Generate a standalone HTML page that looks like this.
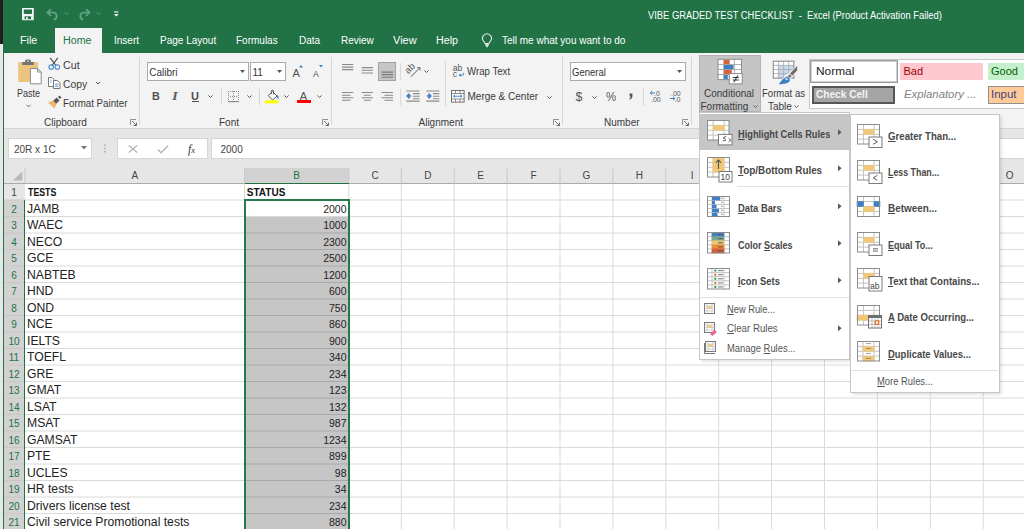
<!DOCTYPE html>
<html><head><meta charset="utf-8">
<style>
*{margin:0;padding:0;box-sizing:border-box}
html,body{width:1024px;height:529px;overflow:hidden;background:#fff}
body{position:relative;font-family:"Liberation Sans",sans-serif;font-size:10px;color:#3a3a3a}
.a{position:absolute}
.t{position:absolute;white-space:nowrap;line-height:12px;font-size:10px}
svg{position:absolute;overflow:visible}
.mi u{text-decoration:underline;text-decoration-thickness:1px;text-underline-offset:1px}
</style></head><body>

<!-- ===== TITLE BAR ===== -->
<div class="a" style="left:0;top:0;width:1024px;height:53px;background:#217346"></div>
<div class="a" style="left:0;top:0;width:3px;height:44px;background:#1f1f1f"></div>
<div class="a" style="left:0;top:44px;width:3px;height:9px;background:#e8e8e8"></div>
<!-- save -->
<svg style="left:22px;top:7.6px" width="12" height="12.5" viewBox="0 0 12 12.5">
<rect x="0" y="0" width="11.8" height="12.3" rx="0.8" fill="#f4f4f4"/>
<path d="M1.8 1.4H10V5A1 1 0 0 1 9 6H2.8A1 1 0 0 1 1.8 5Z" fill="#217346"/>
<rect x="2.6" y="8.3" width="6.4" height="2.9" fill="#217346"/>
<rect x="4" y="9.2" width="1.9" height="2" fill="#f4f4f4"/>
</svg>
<!-- undo -->
<svg style="left:46px;top:7.5px" width="13" height="12" viewBox="0 0 13 12">
<path d="M1.5 4.5H7.5A3.6 3.6 0 0 1 7.8 11.6" fill="none" stroke="#66a583" stroke-width="1.7"/>
<path d="M5 1L1.5 4.5L5 8" fill="none" stroke="#66a583" stroke-width="1.7"/>
</svg>
<svg style="left:64px;top:12px" width="5" height="3" viewBox="0 0 5 3"><path d="M0.5 0.5L2.5 2.5L4.5 0.5" fill="none" stroke="#5a9c78" stroke-width="1"/></svg>
<!-- redo -->
<svg style="left:78px;top:7.5px" width="13" height="12" viewBox="0 0 13 12">
<path d="M11.5 4.5H5.5A3.6 3.6 0 0 0 5.2 11.6" fill="none" stroke="#66a583" stroke-width="1.7"/>
<path d="M8 1L11.5 4.5L8 8" fill="none" stroke="#66a583" stroke-width="1.7"/>
</svg>
<svg style="left:96px;top:12px" width="5" height="3" viewBox="0 0 5 3"><path d="M0.5 0.5L2.5 2.5L4.5 0.5" fill="none" stroke="#5a9c78" stroke-width="1"/></svg>
<!-- customize -->
<svg style="left:113.8px;top:10.8px" width="5" height="6" viewBox="0 0 5 6">
<rect x="0.2" y="0.3" width="4.2" height="1.3" fill="#d8e6de"/>
<path d="M0 3.1H4.6L2.3 5.6Z" fill="#fff"/>
</svg>
<div class="t" style="left:647.6px;top:10px;color:#fff;font-size:10px;transform:scaleX(0.937);transform-origin:0 0">VIBE GRADED TEST CHECKLIST&nbsp; - &nbsp;Excel (Product Activation Failed)</div>

<!-- tabs -->
<div class="a" style="left:55px;top:28px;width:47px;height:25px;background:#f3f3f3"></div>
<div class="t" style="left:20.3px;top:35px;color:#fff;transform:scaleX(1.07);transform-origin:0 0">File</div>
<div class="t" style="left:63.2px;top:35px;color:#217346;transform:scaleX(1.07);transform-origin:0 0">Home</div>
<div class="t" style="left:114px;top:35px;color:#fff">Insert</div>
<div class="t" style="left:160px;top:35px;color:#fff">Page Layout</div>
<div class="t" style="left:236px;top:35px;color:#fff">Formulas</div>
<div class="t" style="left:299px;top:35px;color:#fff">Data</div>
<div class="t" style="left:341px;top:35px;color:#fff">Review</div>
<div class="t" style="left:392.6px;top:35px;color:#fff;transform:scaleX(1.1);transform-origin:0 0">View</div>
<div class="t" style="left:435.6px;top:35px;color:#fff;transform:scaleX(1.07);transform-origin:0 0">Help</div>
<svg style="left:481.7px;top:33.6px" width="10.5" height="13.5" viewBox="0 0 10.5 13.5">
<path d="M3.3 9.6L1.6 7.2A4.4 4.4 0 1 1 8.4 7.2L6.7 9.6Z" fill="none" stroke="#e6efe9" stroke-width="1.05"/>
<rect x="3.3" y="10" width="3.4" height="2" fill="#cfe0d5"/>
<path d="M4 12.7H6" stroke="#e6efe9" stroke-width="1"/>
</svg>
<div class="t" style="left:502px;top:35px;color:#fff">Tell me what you want to do</div>

<!-- ===== RIBBON ===== -->
<div class="a" style="left:3px;top:53px;width:1021px;height:75px;background:#f3f3f3"></div>
<div class="a" style="left:3px;top:128px;width:1021px;height:1px;background:#d4d4d4"></div>
<div class="a" style="left:0;top:53px;width:3px;height:476px;background:#e8e8e8"></div>


<!-- Clipboard group -->
<svg style="left:17px;top:58px" width="26" height="27" viewBox="0 0 26 27">
<rect x="1.2" y="4" width="19.8" height="20" rx="1" fill="#ebc47e"/>
<rect x="5.2" y="4" width="11.5" height="3" rx="0.6" fill="#737373"/>
<path d="M8 4.3V3.2Q8 1.6 9.6 1.6H12.4Q14 1.6 14 3.2V4.3Z" fill="#737373"/>
<rect x="10.2" y="2.6" width="1.6" height="1.2" fill="#e6e6e6"/>
<path d="M13.4 10.5H20.6L24.2 14V25.8H13.4Z" fill="#fff" stroke="#8a8a8a" stroke-width="1"/>
<path d="M20.6 10.5V14H24.2" fill="none" stroke="#8a8a8a" stroke-width="1"/>
</svg>
<div class="t" style="left:16.8px;top:88px;transform:scaleX(0.9);transform-origin:0 0">Paste</div>
<svg style="left:26px;top:104px" width="5" height="4" viewBox="0 0 5 4"><path d="M0.5 0.8L2.5 2.8L4.5 0.8" fill="none" stroke="#555" stroke-width="0.9"/></svg>
<svg style="left:47px;top:57px" width="14" height="14" viewBox="0 0 14 14">
<path d="M3.2 0.8L9.3 9M10.8 0.8L4.7 9" stroke="#505050" stroke-width="1.2"/>
<circle cx="4.2" cy="10" r="2.3" fill="none" stroke="#4a8bd0" stroke-width="1.1"/>
<circle cx="10.3" cy="10" r="2.3" fill="none" stroke="#4a8bd0" stroke-width="1.1"/>
</svg>
<div class="t" style="left:63.2px;top:60px;transform:scaleX(1.07);transform-origin:0 0">Cut</div>
<svg style="left:47px;top:76px" width="15" height="14" viewBox="0 0 15 14">
<path d="M1.5 1.5H5L6.8 3.3V10.5H1.5Z" fill="#fff" stroke="#6a6a6a" stroke-width="0.9"/>
<path d="M6.5 4.5H10.5L13 7V12.5H6.5Z" fill="#fff" stroke="#6a6a6a" stroke-width="0.9"/>
<path d="M3.2 4.2H4.5M3.2 6.2H4.5M8 8.2H11.5M8 10.2H11.5" stroke="#4a8bd0" stroke-width="0.9"/>
</svg>
<div class="t" style="left:63.2px;top:79px;transform:scaleX(1.03);transform-origin:0 0">Copy</div>
<svg style="left:95px;top:81px" width="6" height="4" viewBox="0 0 6 4"><path d="M1 1L3 3L5 1" fill="none" stroke="#5a5a5a" stroke-width="1"/></svg>
<svg style="left:47px;top:95px" width="15" height="14" viewBox="0 0 15 14">
<path d="M1 7.5L6 5.5L9.5 9L7.5 13.5Z" fill="#e9b86a"/>
<path d="M6.3 5.8L9.6 2.5L12.5 5.4L9.2 8.7Z" fill="#555"/>
<path d="M11 2L12.5 0.5L14.5 2.5L13 4Z" fill="#555"/>
</svg>
<div class="t" style="left:63.2px;top:98px;transform:scaleX(0.975);transform-origin:0 0">Format Painter</div>
<div class="t" style="left:44px;top:117px">Clipboard</div>
<svg style="left:130px;top:119px" width="7" height="7" viewBox="0 0 7 7">
<path d="M0.5 6V0.5H6" fill="none" stroke="#888" stroke-width="0.9"/>
<path d="M2 2L6.5 6.5M3.5 6.5H6.5V3.5" fill="none" stroke="#666" stroke-width="0.9"/>
</svg>
<div class="a" style="left:139px;top:57px;width:1px;height:68px;background:#d6d6d6"></div>


<!-- Font group -->
<div class="a" style="left:147px;top:62px;width:102px;height:19px;background:#fff;border:1px solid #ababab"></div>
<div class="t" style="left:149.2px;top:66.5px;color:#333">Calibri</div>
<svg style="left:240px;top:70px" width="5" height="3" viewBox="0 0 5 3"><path d="M0 0H5L2.5 3Z" fill="#555"/></svg>
<div class="a" style="left:250px;top:62px;width:36px;height:19px;background:#fff;border:1px solid #ababab"></div>
<div class="t" style="left:252.5px;top:66.5px;color:#333">11</div>
<svg style="left:277px;top:70px" width="5" height="3" viewBox="0 0 5 3"><path d="M0 0H5L2.5 3Z" fill="#555"/></svg>
<div class="t" style="left:292.5px;top:66.5px;font-size:11px;color:#505050">A</div>
<svg style="left:299.3px;top:65.2px" width="4" height="2.5" viewBox="0 0 4 2.5"><path d="M0 2.5H4L2 0Z" fill="#3f7fc4"/></svg>
<div class="t" style="left:313px;top:67.6px;font-size:8.5px;color:#505050">A</div>
<svg style="left:318.9px;top:65px" width="4" height="2.5" viewBox="0 0 4 2.5"><path d="M0 0H4L2 2.5Z" fill="#3f7fc4"/></svg>

<div class="t" style="left:152px;top:91px;font-size:10px;font-weight:bold;color:#505050;transform:scaleX(1.08);transform-origin:0 0">B</div>
<div class="t" style="left:171.8px;top:90px;font-size:12px;font-style:italic;font-family:'Liberation Serif',serif;font-weight:bold;color:#606060;transform:scaleX(1.25);transform-origin:0 0">I</div>
<div class="t" style="left:191px;top:91px;font-size:10px;font-weight:bold;color:#505050;transform:scaleX(1.1);transform-origin:0 0">U</div>
<div class="a" style="left:191.5px;top:101px;width:7.5px;height:1px;background:#505050"></div>
<svg style="left:208px;top:95px" width="5" height="3" viewBox="0 0 5 3"><path d="M0.4 0.4L2.5 2.5L4.6 0.4" fill="none" stroke="#5a5a5a" stroke-width="1"/></svg>
<div class="a" style="left:221px;top:89px;width:1px;height:16px;background:#d4d4d4"></div>
<svg style="left:228px;top:90.5px" width="11" height="12" viewBox="0 0 11 12">
<g fill="#8e8e8e"><rect x="0" y="0" width="1" height="1"/><rect x="0" y="2" width="1" height="1"/><rect x="0" y="4" width="1" height="1"/><rect x="0" y="6" width="1" height="1"/><rect x="0" y="8" width="1" height="1"/><rect x="5" y="0" width="1" height="1"/><rect x="5" y="2" width="1" height="1"/><rect x="5" y="4" width="1" height="1"/><rect x="5" y="6" width="1" height="1"/><rect x="5" y="8" width="1" height="1"/><rect x="10" y="0" width="1" height="1"/><rect x="10" y="2" width="1" height="1"/><rect x="10" y="4" width="1" height="1"/><rect x="10" y="6" width="1" height="1"/><rect x="10" y="8" width="1" height="1"/><rect x="2" y="0" width="1" height="1"/><rect x="4" y="0" width="1" height="1"/><rect x="6" y="0" width="1" height="1"/><rect x="8" y="0" width="1" height="1"/><rect x="2" y="5" width="1" height="1"/><rect x="4" y="5" width="1" height="1"/><rect x="6" y="5" width="1" height="1"/><rect x="8" y="5" width="1" height="1"/></g>
<path d="M0 10.6H11" stroke="#8a8a8a" stroke-width="1.2"/>
</svg>
<svg style="left:246.5px;top:95px" width="5" height="3" viewBox="0 0 5 3"><path d="M0.4 0.4L2.5 2.5L4.6 0.4" fill="none" stroke="#5a5a5a" stroke-width="1"/></svg>
<div class="a" style="left:258.5px;top:89px;width:1px;height:16px;background:#d4d4d4"></div>
<svg style="left:265px;top:89.5px" width="15" height="14" viewBox="0 0 15 14">
<path d="M3.2 5.6L7.6 1.6L12 6L7.6 10Z" fill="#fff" stroke="#5a5a5a" stroke-width="1"/>
<path d="M6.3 4V1.2A1.1 1.1 0 0 1 8.5 1.2V4.5" fill="none" stroke="#5a5a5a" stroke-width="1"/>
<path d="M11.8 5C13.6 5.3 14.2 7.5 13.2 9.6L12 7.2Z" fill="#3f7fc4"/>
<rect x="0" y="10.2" width="13.3" height="3.2" fill="#ffff00"/>
</svg>
<svg style="left:284px;top:95px" width="5" height="3" viewBox="0 0 5 3"><path d="M0.4 0.4L2.5 2.5L4.6 0.4" fill="none" stroke="#5a5a5a" stroke-width="1"/></svg>
<div class="t" style="left:299.8px;top:89.5px;font-size:11px;color:#505050">A</div>
<div class="a" style="left:297px;top:100px;width:13.5px;height:3.2px;background:#f00"></div>
<svg style="left:317px;top:95px" width="5" height="3" viewBox="0 0 5 3"><path d="M0.4 0.4L2.5 2.5L4.6 0.4" fill="none" stroke="#5a5a5a" stroke-width="1"/></svg>
<div class="t" style="left:219px;top:117px">Font</div>
<svg style="left:322px;top:119px" width="7" height="7" viewBox="0 0 7 7">
<path d="M0.5 6V0.5H6" fill="none" stroke="#888" stroke-width="0.9"/>
<path d="M2 2L6.5 6.5M3.5 6.5H6.5V3.5" fill="none" stroke="#666" stroke-width="0.9"/>
</svg>
<div class="a" style="left:331px;top:57px;width:1px;height:68px;background:#d6d6d6"></div>


<!-- Alignment group -->
<div class="a" style="left:378px;top:62px;width:18.3px;height:18.7px;background:#c6c6c6;border:1px solid #a3a3a3"></div>
<svg style="left:0;top:0" width="1" height="1" viewBox="0 0 1 1">
<path d="M342 64.4H353.3M342 67.1H353.3M342 69.6H353.3M361.7 67.6H372.9M361.7 70.3H372.9M361.7 73H372.9M342 92.5H353.3M342 95.2H350.5M342 97.7H353.3M342 100.3H350.5M361.7 92.5H372.9M363.8 95.2H370.8M361.7 97.7H372.9M363.8 100.3H370.8M381.5 92.5H393.1M384.5 95.2H393.1M381.5 97.7H393.1M384.5 100.3H393.1M406.2 90.9H419.6M413 93.6H419.6M413 96.3H419.6M413 98.8H419.6M406.2 101.1H419.6M426.2 90.9H439.3M433 93.6H439.3M433 96.3H439.3M433 98.8H439.3M426.2 101.1H439.3" stroke="#8a8a8a" stroke-width="1.05" fill="none"/>
<path d="M381.5 72.1H393.1M381.5 74.6H393.1M381.5 77.3H393.1" stroke="#787878" stroke-width="1.05" fill="none"/>
<path d="M411.2 96H407.3M409.6 93.7L407.2 96L409.6 98.3" fill="none" stroke="#3f7fc4" stroke-width="1.6"/>
<path d="M426.8 96H430.7M428.4 93.7L430.8 96L428.4 98.3" fill="none" stroke="#3f7fc4" stroke-width="1.6"/>
<path d="M400.5 63V80M400.5 88V105.5" stroke="#dadada" stroke-width="1"/>
</svg>
<svg style="left:405px;top:63px" width="16" height="15" viewBox="0 0 16 15">
<text x="0" y="0" font-family="Liberation Sans" font-size="9.5" fill="#555" transform="translate(3.3,11.2) rotate(-45)">ab</text>
<path d="M6 13.6L14.2 5.4" stroke="#555" stroke-width="1"/>
<path d="M12.2 4.6H15V7.4" fill="none" stroke="#555" stroke-width="0.9"/>
</svg>
<svg style="left:424px;top:70px" width="5" height="3" viewBox="0 0 5 3"><path d="M0.4 0.4L2.5 2.5L4.6 0.4" fill="none" stroke="#5a5a5a" stroke-width="1"/></svg>
<div class="a" style="left:445px;top:61px;width:1px;height:45px;background:#d8d8d8"></div>
<svg style="left:452px;top:64px" width="13" height="14" viewBox="0 0 13 14">
<text x="0.8" y="6.8" font-family="Liberation Sans" font-size="8.6" fill="#555">ab</text>
<text x="0.8" y="13.2" font-family="Liberation Sans" font-size="8.6" fill="#555">c</text>
<path d="M7.5 11.2H10.2Q11.6 11.2 11.6 9.8V8.8" fill="none" stroke="#3f7fc4" stroke-width="1"/>
<path d="M6.6 11.2L8.6 9.6V12.8Z" fill="#3f7fc4"/>
</svg>
<div class="t" style="left:467px;top:66px;transform:scaleX(0.965);transform-origin:0 0">Wrap Text</div>
<svg style="left:451px;top:90px" width="14" height="13" viewBox="0 0 14 13">
<rect x="0.5" y="0.5" width="12.6" height="11.6" fill="#fff" stroke="#6e6e6e" stroke-width="1"/>
<path d="M0.5 3.5H13M0.5 9H13M4.5 0.5V3.5M9 0.5V3.5M4.5 9V12M9 9V12" stroke="#6e6e6e" stroke-width="0.8"/>
<path d="M2.5 6.2H11M4 4.8L2.5 6.2L4 7.6M9.5 4.8L11 6.2L9.5 7.6" fill="none" stroke="#3f7fc4" stroke-width="1"/>
</svg>
<div class="t" style="left:467.5px;top:91px">Merge &amp; Center</div>
<svg style="left:547px;top:95.5px" width="5" height="3" viewBox="0 0 5 3"><path d="M0.4 0.4L2.5 2.5L4.6 0.4" fill="none" stroke="#5a5a5a" stroke-width="1"/></svg>
<div class="t" style="left:418.5px;top:117px">Alignment</div>
<svg style="left:553px;top:119px" width="7" height="7" viewBox="0 0 7 7">
<path d="M0.5 6V0.5H6" fill="none" stroke="#888" stroke-width="0.9"/>
<path d="M2 2L6.5 6.5M3.5 6.5H6.5V3.5" fill="none" stroke="#666" stroke-width="0.9"/>
</svg>
<div class="a" style="left:562px;top:57px;width:1px;height:68px;background:#d6d6d6"></div>

<!-- Number group -->
<div class="a" style="left:570px;top:62px;width:115.5px;height:19px;background:#fff;border:1px solid #ababab"></div>
<div class="t" style="left:572.3px;top:66.5px;color:#333;transform:scaleX(0.95);transform-origin:0 0">General</div>
<svg style="left:677px;top:70px" width="5" height="3" viewBox="0 0 5 3"><path d="M0 0H5L2.5 3Z" fill="#555"/></svg>
<div class="t" style="left:575.5px;top:90.5px;font-size:12.5px;color:#555">$</div>
<svg style="left:591.5px;top:95.5px" width="5" height="3" viewBox="0 0 5 3"><path d="M0.4 0.4L2.5 2.5L4.6 0.4" fill="none" stroke="#5a5a5a" stroke-width="1"/></svg>
<div class="t" style="left:606px;top:91px;font-size:12px;color:#555;transform:scaleX(0.95);transform-origin:0 0">%</div>
<svg style="left:628px;top:92.5px" width="6" height="7" viewBox="0 0 6 7"><path d="M1.6 0.6H4.4V3.2C4.4 4.8 3.5 6 1.6 6.6L1.2 5.8C2.2 5.3 2.6 4.6 2.6 3.6H1.6Z" fill="#555"/></svg>
<div class="a" style="left:643px;top:88px;width:1px;height:17.5px;background:#d8d8d8"></div>
<svg style="left:649px;top:90px" width="14" height="13" viewBox="0 0 14 13">
<text x="5" y="5.6" font-family="Liberation Sans" font-size="7" fill="#555">.0</text>
<text x="2" y="11.6" font-family="Liberation Sans" font-size="7" fill="#555">.00</text>
<path d="M6 3H1.5M3.3 1.2L1.2 3L3.3 4.8" fill="none" stroke="#3f7fc4" stroke-width="1"/>
</svg>
<svg style="left:669px;top:90px" width="14" height="13" viewBox="0 0 14 13">
<text x="2" y="5.6" font-family="Liberation Sans" font-size="7" fill="#555">.00</text>
<text x="5.5" y="11.6" font-family="Liberation Sans" font-size="7" fill="#555">.0</text>
<path d="M0.8 8.5H5.8M4 6.7L6 8.5L4 10.3" fill="none" stroke="#3f7fc4" stroke-width="1"/>
</svg>
<div class="t" style="left:604px;top:117px">Number</div>
<svg style="left:682px;top:119px" width="7" height="7" viewBox="0 0 7 7">
<path d="M0.5 6V0.5H6" fill="none" stroke="#888" stroke-width="0.9"/>
<path d="M2 2L6.5 6.5M3.5 6.5H6.5V3.5" fill="none" stroke="#666" stroke-width="0.9"/>
</svg>
<div class="a" style="left:691px;top:57px;width:1px;height:68px;background:#d6d6d6"></div>


<!-- Styles group -->
<div class="a" style="left:699px;top:55px;width:61.5px;height:56.5px;background:#c5c5c5;border:1px solid #b3b3b3"></div>
<svg style="left:717px;top:59px" width="27" height="26" viewBox="0 0 27 26">
<rect x="1" y="0.3" width="23.5" height="20.3" fill="#fff"/>
<path d="M6.8 0.3V20.6M12.3 0.3V20.6M17.4 0.3V20.6M1 5.5H24.5M1 10.5H24.5M1 15.5H24.5" stroke="#a8a8a8" stroke-width="0.9"/>
<rect x="6.8" y="0.8" width="5.5" height="4.4" fill="#d9623b"/>
<rect x="6.8" y="5.9" width="9.7" height="4.3" fill="#3f7fc4"/>
<rect x="6.8" y="10.9" width="8" height="4.3" fill="#d9623b"/>
<rect x="6.8" y="15.9" width="4" height="4.4" fill="#3f7fc4"/>
<rect x="1" y="0.3" width="23.5" height="20.3" fill="none" stroke="#8e8e8e" stroke-width="1"/>
<rect x="12.3" y="14.6" width="13" height="10.3" fill="#fff" stroke="#8a8a8a" stroke-width="1"/>
<path d="M15.8 18.4H21.8M15.8 21H21.8M20.8 16.4L16.8 23.2" stroke="#3a3a3a" stroke-width="1.05" fill="none"/>
</svg>
<div class="t" style="left:704px;top:88px">Conditional</div>
<div class="t" style="left:700.5px;top:100.8px">Formatting</div>
<svg style="left:753px;top:105px" width="5" height="3" viewBox="0 0 5 3"><path d="M0.4 0.4L2.5 2.5L4.6 0.4" fill="none" stroke="#555" stroke-width="0.9"/></svg>

<svg style="left:772px;top:60px" width="27" height="25" viewBox="0 0 27 25">
<rect x="1.3" y="1.2" width="20.6" height="16.9" fill="#fff"/>
<rect x="6.4" y="5.4" width="15.5" height="12.7" fill="#c5d9ef"/>
<path d="M6.4 1.2V18.1M11.6 1.2V18.1M16.7 1.2V18.1M1.3 5.4H21.9M1.3 9.5H21.9M1.3 13.6H21.9" stroke="#a8a8a8" stroke-width="0.8"/>
<rect x="1.3" y="1.2" width="20.6" height="16.9" fill="none" stroke="#8c8c8c" stroke-width="1.1"/>
<path d="M26 4.5V10.5L20.2 17.5L15 22.5L6 25L13 15.5L17.5 12.5Z" fill="#f3f3f3"/>
<path d="M25.2 6V10.2L20.3 15.8L18 13.6Z" fill="#6e6e6e"/>
<path d="M17.6 14.2L19.7 16.2L18 18L15.9 16Z" fill="#6e6e6e"/>
<path d="M15.2 16.6C17.2 17.2 18.4 19.2 17.6 21.2C16.4 23.4 12.5 24 6.8 24.2C9.2 21 11.6 17.6 15.2 16.6Z" fill="#3f7fc4"/>
<path d="M13.6 17.9C14.9 17.8 15.8 18.7 15.8 20L13.4 19.6Z" fill="#fff"/>
</svg>
<div class="t" style="left:762.3px;top:88px;transform:scaleX(0.955);transform-origin:0 0">Format as</div>
<div class="t" style="left:768px;top:100.8px">Table</div>
<svg style="left:794px;top:105px" width="5" height="3" viewBox="0 0 5 3"><path d="M0.4 0.4L2.5 2.5L4.6 0.4" fill="none" stroke="#555" stroke-width="0.9"/></svg>

<div class="a" style="left:808.5px;top:59px;width:220px;height:49.5px;background:#fff;border:1px solid #c8c8c8"></div>
<div class="a" style="left:810px;top:60.3px;width:88px;height:22.3px;background:#fff;border:1px solid #9c9c9c"></div>
<div class="a" style="left:811px;top:61.3px;width:86px;height:20.3px;border:1px solid #d0d0d0"></div>
<div class="t" style="left:815.8px;top:64.6px;font-size:11px;color:#1a1a1a;transform:scaleX(1.08);transform-origin:0 0">Normal</div>
<div class="a" style="left:900px;top:62.9px;width:82.7px;height:17.5px;background:#ffc7ce"></div>
<div class="t" style="left:903.5px;top:64.7px;font-size:11px;color:#9c0006">Bad</div>
<div class="a" style="left:987.7px;top:62.9px;width:40px;height:17.5px;background:#c6efce"></div>
<div class="t" style="left:991px;top:64.7px;font-size:11px;color:#006100">Good</div>
<div class="a" style="left:812.4px;top:86px;width:82.8px;height:17.7px;background:#a5a5a5;border:2px solid #565656"></div>
<div class="t" style="left:816px;top:88px;font-size:11px;font-weight:bold;color:#f4f4f4;transform:scaleX(0.92);transform-origin:0 0">Check Cell</div>
<div class="t" style="left:903.5px;top:87.5px;font-size:11px;font-style:italic;color:#7f7f7f;transform:scaleX(1.03);transform-origin:0 0">Explanatory ...</div>
<div class="a" style="left:987.7px;top:85.9px;width:40px;height:17.9px;background:#ffcc99;border:1px solid #8f8f8f"></div>
<div class="t" style="left:991px;top:87.5px;font-size:11px;color:#3f3f76;transform:scaleX(1.04);transform-origin:0 0">Input</div>

<!-- ===== FORMULA BAR ===== -->
<div class="a" style="left:3px;top:129px;width:1021px;height:39px;background:#e6e6e6"></div>
<div class="a" style="left:8px;top:138px;width:84.3px;height:21px;background:#fff;border:1px solid #d6d6d6"></div>
<div class="t" style="left:14px;top:144px;color:#444">20R x 1C</div>
<svg style="left:81px;top:146px" width="6" height="4" viewBox="0 0 6 4"><path d="M0 0H6L3 3.5Z" fill="#777"/></svg>
<svg style="left:104px;top:144px" width="2" height="9" viewBox="0 0 2 9"><rect x="0.2" y="0.5" width="1.3" height="1.3" fill="#999"/><rect x="0.2" y="3.8" width="1.3" height="1.3" fill="#999"/><rect x="0.2" y="7.1" width="1.3" height="1.3" fill="#999"/></svg>
<div class="a" style="left:117.3px;top:138px;width:90.5px;height:21px;background:#fff;border:1px solid #d6d6d6"></div>
<svg style="left:128px;top:144.8px" width="10" height="8" viewBox="0 0 10 8"><path d="M0.8 0.5L9.2 7.6M9.2 0.5L0.8 7.6" stroke="#b4b4b4" stroke-width="1.25"/></svg>
<svg style="left:157px;top:144.5px" width="12" height="9" viewBox="0 0 12 9"><path d="M0.8 4.5L4 7.8L11.2 0.8" fill="none" stroke="#b4b4b4" stroke-width="1.35"/></svg>
<div class="t" style="left:188px;top:142.5px;font-family:'Liberation Serif',serif;font-style:italic;font-weight:normal;font-size:11.5px;color:#333">f<span style="font-size:8.5px;position:relative;top:0.5px">x</span></div>
<div class="a" style="left:210.5px;top:138px;width:820px;height:21px;background:#fff;border:1px solid #d6d6d6"></div>
<div class="t" style="left:220.5px;top:144px;color:#444">2000</div>

<!-- ===== GRID ===== -->
<div class="a" style="left:3px;top:168px;width:1021px;height:361px;background:#fff"></div>
<div class="a" style="left:3px;top:168px;width:1021px;height:15.5px;background:#e6e6e6"></div>
<div class="a" style="left:3px;top:183.5px;width:22px;height:346px;background:#e6e6e6"></div>
<div class="a" style="left:25px;top:200px;width:-1px;height:0"></div>
<div class="a" style="left:244.5px;top:168px;width:104.5px;height:15.5px;background:#d2d2d2"></div>
<div class="a" style="left:3px;top:200.0px;width:22px;height:329.0px;background:#d2d2d2"></div>
<svg style="left:0;top:0" width="1024" height="529" viewBox="0 0 1024 529">
<line x1="25" y1="168" x2="25" y2="183.5" stroke="#c8c8c8" stroke-width="1"/>
<line x1="244.5" y1="168" x2="244.5" y2="183.5" stroke="#c8c8c8" stroke-width="1"/>
<line x1="348.8" y1="168" x2="348.8" y2="183.5" stroke="#c8c8c8" stroke-width="1"/>
<line x1="401.3" y1="168" x2="401.3" y2="183.5" stroke="#c8c8c8" stroke-width="1"/>
<line x1="454.2" y1="168" x2="454.2" y2="183.5" stroke="#c8c8c8" stroke-width="1"/>
<line x1="507.1" y1="168" x2="507.1" y2="183.5" stroke="#c8c8c8" stroke-width="1"/>
<line x1="560.0" y1="168" x2="560.0" y2="183.5" stroke="#c8c8c8" stroke-width="1"/>
<line x1="612.9" y1="168" x2="612.9" y2="183.5" stroke="#c8c8c8" stroke-width="1"/>
<line x1="665.8" y1="168" x2="665.8" y2="183.5" stroke="#c8c8c8" stroke-width="1"/>
<line x1="718.7" y1="168" x2="718.7" y2="183.5" stroke="#c8c8c8" stroke-width="1"/>
<line x1="771.6" y1="168" x2="771.6" y2="183.5" stroke="#c8c8c8" stroke-width="1"/>
<line x1="824.5" y1="168" x2="824.5" y2="183.5" stroke="#c8c8c8" stroke-width="1"/>
<line x1="877.4" y1="168" x2="877.4" y2="183.5" stroke="#c8c8c8" stroke-width="1"/>
<line x1="930.3" y1="168" x2="930.3" y2="183.5" stroke="#c8c8c8" stroke-width="1"/>
<line x1="983.2" y1="168" x2="983.2" y2="183.5" stroke="#c8c8c8" stroke-width="1"/>
<line x1="1036.1" y1="168" x2="1036.1" y2="183.5" stroke="#c8c8c8" stroke-width="1"/>
<line x1="3" y1="183.5" x2="1024" y2="183.5" stroke="#ababab" stroke-width="1"/>
<line x1="244.5" y1="183.5" x2="244.5" y2="529" stroke="#dadada" stroke-width="1"/>
<line x1="348.8" y1="183.5" x2="348.8" y2="529" stroke="#dadada" stroke-width="1"/>
<line x1="401.3" y1="183.5" x2="401.3" y2="529" stroke="#dadada" stroke-width="1"/>
<line x1="454.2" y1="183.5" x2="454.2" y2="529" stroke="#dadada" stroke-width="1"/>
<line x1="507.1" y1="183.5" x2="507.1" y2="529" stroke="#dadada" stroke-width="1"/>
<line x1="560.0" y1="183.5" x2="560.0" y2="529" stroke="#dadada" stroke-width="1"/>
<line x1="612.9" y1="183.5" x2="612.9" y2="529" stroke="#dadada" stroke-width="1"/>
<line x1="665.8" y1="183.5" x2="665.8" y2="529" stroke="#dadada" stroke-width="1"/>
<line x1="718.7" y1="183.5" x2="718.7" y2="529" stroke="#dadada" stroke-width="1"/>
<line x1="771.6" y1="183.5" x2="771.6" y2="529" stroke="#dadada" stroke-width="1"/>
<line x1="824.5" y1="183.5" x2="824.5" y2="529" stroke="#dadada" stroke-width="1"/>
<line x1="877.4" y1="183.5" x2="877.4" y2="529" stroke="#dadada" stroke-width="1"/>
<line x1="930.3" y1="183.5" x2="930.3" y2="529" stroke="#dadada" stroke-width="1"/>
<line x1="983.2" y1="183.5" x2="983.2" y2="529" stroke="#dadada" stroke-width="1"/>
<line x1="1036.1" y1="183.5" x2="1036.1" y2="529" stroke="#dadada" stroke-width="1"/>
<line x1="25" y1="200.0" x2="1024" y2="200.0" stroke="#dadada" stroke-width="1"/>
<line x1="3" y1="200.0" x2="25" y2="200.0" stroke="#c8c8c8" stroke-width="1"/>
<line x1="25" y1="216.5" x2="1024" y2="216.5" stroke="#dadada" stroke-width="1"/>
<line x1="3" y1="216.5" x2="25" y2="216.5" stroke="#c8c8c8" stroke-width="1"/>
<line x1="25" y1="233.0" x2="1024" y2="233.0" stroke="#dadada" stroke-width="1"/>
<line x1="3" y1="233.0" x2="25" y2="233.0" stroke="#c8c8c8" stroke-width="1"/>
<line x1="25" y1="249.5" x2="1024" y2="249.5" stroke="#dadada" stroke-width="1"/>
<line x1="3" y1="249.5" x2="25" y2="249.5" stroke="#c8c8c8" stroke-width="1"/>
<line x1="25" y1="266.0" x2="1024" y2="266.0" stroke="#dadada" stroke-width="1"/>
<line x1="3" y1="266.0" x2="25" y2="266.0" stroke="#c8c8c8" stroke-width="1"/>
<line x1="25" y1="282.5" x2="1024" y2="282.5" stroke="#dadada" stroke-width="1"/>
<line x1="3" y1="282.5" x2="25" y2="282.5" stroke="#c8c8c8" stroke-width="1"/>
<line x1="25" y1="299.0" x2="1024" y2="299.0" stroke="#dadada" stroke-width="1"/>
<line x1="3" y1="299.0" x2="25" y2="299.0" stroke="#c8c8c8" stroke-width="1"/>
<line x1="25" y1="315.5" x2="1024" y2="315.5" stroke="#dadada" stroke-width="1"/>
<line x1="3" y1="315.5" x2="25" y2="315.5" stroke="#c8c8c8" stroke-width="1"/>
<line x1="25" y1="332.0" x2="1024" y2="332.0" stroke="#dadada" stroke-width="1"/>
<line x1="3" y1="332.0" x2="25" y2="332.0" stroke="#c8c8c8" stroke-width="1"/>
<line x1="25" y1="348.5" x2="1024" y2="348.5" stroke="#dadada" stroke-width="1"/>
<line x1="3" y1="348.5" x2="25" y2="348.5" stroke="#c8c8c8" stroke-width="1"/>
<line x1="25" y1="365.0" x2="1024" y2="365.0" stroke="#dadada" stroke-width="1"/>
<line x1="3" y1="365.0" x2="25" y2="365.0" stroke="#c8c8c8" stroke-width="1"/>
<line x1="25" y1="381.5" x2="1024" y2="381.5" stroke="#dadada" stroke-width="1"/>
<line x1="3" y1="381.5" x2="25" y2="381.5" stroke="#c8c8c8" stroke-width="1"/>
<line x1="25" y1="398.0" x2="1024" y2="398.0" stroke="#dadada" stroke-width="1"/>
<line x1="3" y1="398.0" x2="25" y2="398.0" stroke="#c8c8c8" stroke-width="1"/>
<line x1="25" y1="414.5" x2="1024" y2="414.5" stroke="#dadada" stroke-width="1"/>
<line x1="3" y1="414.5" x2="25" y2="414.5" stroke="#c8c8c8" stroke-width="1"/>
<line x1="25" y1="431.0" x2="1024" y2="431.0" stroke="#dadada" stroke-width="1"/>
<line x1="3" y1="431.0" x2="25" y2="431.0" stroke="#c8c8c8" stroke-width="1"/>
<line x1="25" y1="447.5" x2="1024" y2="447.5" stroke="#dadada" stroke-width="1"/>
<line x1="3" y1="447.5" x2="25" y2="447.5" stroke="#c8c8c8" stroke-width="1"/>
<line x1="25" y1="464.0" x2="1024" y2="464.0" stroke="#dadada" stroke-width="1"/>
<line x1="3" y1="464.0" x2="25" y2="464.0" stroke="#c8c8c8" stroke-width="1"/>
<line x1="25" y1="480.5" x2="1024" y2="480.5" stroke="#dadada" stroke-width="1"/>
<line x1="3" y1="480.5" x2="25" y2="480.5" stroke="#c8c8c8" stroke-width="1"/>
<line x1="25" y1="497.0" x2="1024" y2="497.0" stroke="#dadada" stroke-width="1"/>
<line x1="3" y1="497.0" x2="25" y2="497.0" stroke="#c8c8c8" stroke-width="1"/>
<line x1="25" y1="513.5" x2="1024" y2="513.5" stroke="#dadada" stroke-width="1"/>
<line x1="3" y1="513.5" x2="25" y2="513.5" stroke="#c8c8c8" stroke-width="1"/>
<line x1="25" y1="530.0" x2="1024" y2="530.0" stroke="#dadada" stroke-width="1"/>
<line x1="3" y1="530.0" x2="25" y2="530.0" stroke="#c8c8c8" stroke-width="1"/>
</svg>
<div class="a" style="left:245px;top:216.5px;width:103px;height:312.5px;background:rgba(0,0,0,0.222)"></div>
<div class="a" style="left:2.5px;top:44px;width:1.3px;height:485px;background:#217346"></div>
<svg style="left:12px;top:171px" width="11" height="10" viewBox="0 0 11 10"><path d="M10.3 0.5V9.5H1Z" fill="#b8b8b8"/></svg>
<div class="t" style="left:104.75px;width:60px;text-align:center;top:170px;color:#444">A</div>
<div class="t" style="left:266.65px;width:60px;text-align:center;top:170px;color:#217346">B</div>
<div class="t" style="left:345.05px;width:60px;text-align:center;top:170px;color:#444">C</div>
<div class="t" style="left:397.75px;width:60px;text-align:center;top:170px;color:#444">D</div>
<div class="t" style="left:450.65px;width:60px;text-align:center;top:170px;color:#444">E</div>
<div class="t" style="left:503.54999999999995px;width:60px;text-align:center;top:170px;color:#444">F</div>
<div class="t" style="left:556.45px;width:60px;text-align:center;top:170px;color:#444">G</div>
<div class="t" style="left:609.3499999999999px;width:60px;text-align:center;top:170px;color:#444">H</div>
<div class="t" style="left:662.25px;width:60px;text-align:center;top:170px;color:#444">I</div>
<div class="t" style="left:715.1500000000001px;width:60px;text-align:center;top:170px;color:#444">J</div>
<div class="t" style="left:768.05px;width:60px;text-align:center;top:170px;color:#444">K</div>
<div class="t" style="left:820.95px;width:60px;text-align:center;top:170px;color:#444">L</div>
<div class="t" style="left:873.8499999999999px;width:60px;text-align:center;top:170px;color:#444">M</div>
<div class="t" style="left:926.75px;width:60px;text-align:center;top:170px;color:#444">N</div>
<div class="t" style="left:979.65px;width:60px;text-align:center;top:170px;color:#444">O</div>
<div class="a" style="left:244.5px;top:182.5px;width:104.5px;height:1.5px;background:#217346"></div>
<div class="a" style="left:23.8px;top:200.0px;width:1.5px;height:329.0px;background:#217346"></div>
<div class="t" style="left:3px;width:22px;text-align:center;top:187.0px;color:#444">1</div>
<div class="t" style="left:3px;width:22px;text-align:center;top:203.5px;color:#217346">2</div>
<div class="t" style="left:3px;width:22px;text-align:center;top:220.0px;color:#217346">3</div>
<div class="t" style="left:3px;width:22px;text-align:center;top:236.5px;color:#217346">4</div>
<div class="t" style="left:3px;width:22px;text-align:center;top:253.0px;color:#217346">5</div>
<div class="t" style="left:3px;width:22px;text-align:center;top:269.5px;color:#217346">6</div>
<div class="t" style="left:3px;width:22px;text-align:center;top:286.0px;color:#217346">7</div>
<div class="t" style="left:3px;width:22px;text-align:center;top:302.5px;color:#217346">8</div>
<div class="t" style="left:3px;width:22px;text-align:center;top:319.0px;color:#217346">9</div>
<div class="t" style="left:3px;width:22px;text-align:center;top:335.5px;color:#217346">10</div>
<div class="t" style="left:3px;width:22px;text-align:center;top:352.0px;color:#217346">11</div>
<div class="t" style="left:3px;width:22px;text-align:center;top:368.5px;color:#217346">12</div>
<div class="t" style="left:3px;width:22px;text-align:center;top:385.0px;color:#217346">13</div>
<div class="t" style="left:3px;width:22px;text-align:center;top:401.5px;color:#217346">14</div>
<div class="t" style="left:3px;width:22px;text-align:center;top:418.0px;color:#217346">15</div>
<div class="t" style="left:3px;width:22px;text-align:center;top:434.5px;color:#217346">16</div>
<div class="t" style="left:3px;width:22px;text-align:center;top:451.0px;color:#217346">17</div>
<div class="t" style="left:3px;width:22px;text-align:center;top:467.5px;color:#217346">18</div>
<div class="t" style="left:3px;width:22px;text-align:center;top:484.0px;color:#217346">19</div>
<div class="t" style="left:3px;width:22px;text-align:center;top:500.5px;color:#217346">20</div>
<div class="t" style="left:3px;width:22px;text-align:center;top:517.0px;color:#217346">21</div>
<div class="t" style="left:27.5px;top:187.0px;font-weight:bold;color:#111;transform:scaleX(0.88);transform-origin:0 0">TESTS</div>
<div class="t" style="left:246.8px;top:187px;font-weight:bold;color:#111">STATUS</div>
<div class="t" style="left:27px;top:201.8px;font-size:12px;line-height:14px;color:#222;transform:scaleX(1.015);transform-origin:0 0">JAMB</div>
<div class="t" style="left:246px;width:100.5px;text-align:right;top:202.8px;font-size:10.5px;color:#222">2000</div>
<div class="t" style="left:27px;top:218.3px;font-size:12px;line-height:14px;color:#222;transform:scaleX(1.015);transform-origin:0 0">WAEC</div>
<div class="t" style="left:246px;width:100.5px;text-align:right;top:219.3px;font-size:10.5px;color:#222">1000</div>
<div class="t" style="left:27px;top:234.8px;font-size:12px;line-height:14px;color:#222;transform:scaleX(1.015);transform-origin:0 0">NECO</div>
<div class="t" style="left:246px;width:100.5px;text-align:right;top:235.8px;font-size:10.5px;color:#222">2300</div>
<div class="t" style="left:27px;top:251.3px;font-size:12px;line-height:14px;color:#222;transform:scaleX(1.015);transform-origin:0 0">GCE</div>
<div class="t" style="left:246px;width:100.5px;text-align:right;top:252.3px;font-size:10.5px;color:#222">2500</div>
<div class="t" style="left:27px;top:267.8px;font-size:12px;line-height:14px;color:#222;transform:scaleX(1.015);transform-origin:0 0">NABTEB</div>
<div class="t" style="left:246px;width:100.5px;text-align:right;top:268.8px;font-size:10.5px;color:#222">1200</div>
<div class="t" style="left:27px;top:284.3px;font-size:12px;line-height:14px;color:#222;transform:scaleX(1.015);transform-origin:0 0">HND</div>
<div class="t" style="left:246px;width:100.5px;text-align:right;top:285.3px;font-size:10.5px;color:#222">600</div>
<div class="t" style="left:27px;top:300.8px;font-size:12px;line-height:14px;color:#222;transform:scaleX(1.015);transform-origin:0 0">OND</div>
<div class="t" style="left:246px;width:100.5px;text-align:right;top:301.8px;font-size:10.5px;color:#222">750</div>
<div class="t" style="left:27px;top:317.3px;font-size:12px;line-height:14px;color:#222;transform:scaleX(1.015);transform-origin:0 0">NCE</div>
<div class="t" style="left:246px;width:100.5px;text-align:right;top:318.3px;font-size:10.5px;color:#222">860</div>
<div class="t" style="left:27px;top:333.8px;font-size:12px;line-height:14px;color:#222;transform:scaleX(1.015);transform-origin:0 0">IELTS</div>
<div class="t" style="left:246px;width:100.5px;text-align:right;top:334.8px;font-size:10.5px;color:#222">900</div>
<div class="t" style="left:27px;top:350.3px;font-size:12px;line-height:14px;color:#222;transform:scaleX(1.015);transform-origin:0 0">TOEFL</div>
<div class="t" style="left:246px;width:100.5px;text-align:right;top:351.3px;font-size:10.5px;color:#222">340</div>
<div class="t" style="left:27px;top:366.8px;font-size:12px;line-height:14px;color:#222;transform:scaleX(1.015);transform-origin:0 0">GRE</div>
<div class="t" style="left:246px;width:100.5px;text-align:right;top:367.8px;font-size:10.5px;color:#222">234</div>
<div class="t" style="left:27px;top:383.3px;font-size:12px;line-height:14px;color:#222;transform:scaleX(1.015);transform-origin:0 0">GMAT</div>
<div class="t" style="left:246px;width:100.5px;text-align:right;top:384.3px;font-size:10.5px;color:#222">123</div>
<div class="t" style="left:27px;top:399.8px;font-size:12px;line-height:14px;color:#222;transform:scaleX(1.015);transform-origin:0 0">LSAT</div>
<div class="t" style="left:246px;width:100.5px;text-align:right;top:400.8px;font-size:10.5px;color:#222">132</div>
<div class="t" style="left:27px;top:416.3px;font-size:12px;line-height:14px;color:#222;transform:scaleX(1.015);transform-origin:0 0">MSAT</div>
<div class="t" style="left:246px;width:100.5px;text-align:right;top:417.3px;font-size:10.5px;color:#222">987</div>
<div class="t" style="left:27px;top:432.8px;font-size:12px;line-height:14px;color:#222;transform:scaleX(1.015);transform-origin:0 0">GAMSAT</div>
<div class="t" style="left:246px;width:100.5px;text-align:right;top:433.8px;font-size:10.5px;color:#222">1234</div>
<div class="t" style="left:27px;top:449.3px;font-size:12px;line-height:14px;color:#222;transform:scaleX(1.015);transform-origin:0 0">PTE</div>
<div class="t" style="left:246px;width:100.5px;text-align:right;top:450.3px;font-size:10.5px;color:#222">899</div>
<div class="t" style="left:27px;top:465.8px;font-size:12px;line-height:14px;color:#222;transform:scaleX(1.015);transform-origin:0 0">UCLES</div>
<div class="t" style="left:246px;width:100.5px;text-align:right;top:466.8px;font-size:10.5px;color:#222">98</div>
<div class="t" style="left:27px;top:482.3px;font-size:12px;line-height:14px;color:#222;transform:scaleX(1.015);transform-origin:0 0">HR tests</div>
<div class="t" style="left:246px;width:100.5px;text-align:right;top:483.3px;font-size:10.5px;color:#222">34</div>
<div class="t" style="left:27px;top:498.8px;font-size:12px;line-height:14px;color:#222;transform:scaleX(1.015);transform-origin:0 0">Drivers license test</div>
<div class="t" style="left:246px;width:100.5px;text-align:right;top:499.8px;font-size:10.5px;color:#222">234</div>
<div class="t" style="left:27px;top:515.3px;font-size:12px;line-height:14px;color:#222;transform:scaleX(1.015);transform-origin:0 0">Civil service Promotional tests</div>
<div class="t" style="left:246px;width:100.5px;text-align:right;top:516.3px;font-size:10.5px;color:#222">880</div>
<div class="a" style="left:244px;top:199px;width:105.5px;height:340px;border:2px solid #237a4b"></div>


<!-- ===== CF MENU ===== -->
<div class="a" style="left:699px;top:112px;width:150.5px;height:247.5px;background:#fff;border:1px solid #c6c6c6;box-shadow:1.5px 1.5px 3px rgba(0,0,0,0.13)"></div>
<div class="a" style="left:700px;top:114px;width:149px;height:35.5px;background:#c6c6c6"></div>
<svg style="left:707px;top:120.3px" width="26.5" height="25.5" viewBox="0 0 26.5 25.5">
<rect x="0.5" y="0.5" width="21.5" height="19.5" fill="#fff"/>
<path d="M6.1 0.5V20.0M17.1 0.5V20.0M0.5 5.38H22.0M0.5 10.25H22.0M0.5 15.12H22.0" stroke="#c4c4c4" stroke-width="1"/>
<rect x="5.8" y="5.08" width="11.600000000000001" height="5.47" fill="#f0c878"/>
<rect x="0.5" y="0.5" width="21.5" height="19.5" fill="none" stroke="#8c8c8c" stroke-width="1"/>
<rect x="11.5" y="14.4" width="13.5" height="10.5" fill="#fff" stroke="#7a7a7a" stroke-width="1"/>
<path d="M19 16.2L16 17.8L19 19.4M16 20.6H19" fill="none" stroke="#555" stroke-width="0.9"/><path d="M21.5 18.5L24 20.2L21.5 22" fill="none" stroke="#555" stroke-width="0.9"/></svg>
<div class="t mi" style="left:737.7px;top:129.1px;font-weight:bold;color:#484848;transform:scaleX(0.923);transform-origin:0 0"><u>H</u>ighlight Cells Rules</div>
<svg style="left:838px;top:129px" width="4" height="7" viewBox="0 0 4 7"><path d="M0 0.3L3.6 3.3L0 6.3Z" fill="#5a5a5a"/></svg>
<svg style="left:707px;top:157px" width="27" height="25.5" viewBox="0 0 27 25.5">
<rect x="0.5" y="0.5" width="22" height="19.5" fill="#fff"/>
<path d="M6 0.5V20.0M17 0.5V20.0M0.5 5.38H22.5M0.5 10.25H22.5M0.5 15.12H22.5" stroke="#c4c4c4" stroke-width="1"/>
<rect x="5.7" y="0.20" width="11.6" height="5.47" fill="#f0c878"/>
<rect x="5.7" y="5.08" width="11.6" height="5.47" fill="#f0c878"/>
<rect x="5.7" y="9.95" width="11.6" height="5.47" fill="#f0c878"/>
<rect x="0.5" y="0.5" width="22" height="19.5" fill="none" stroke="#8c8c8c" stroke-width="1"/>
<path d="M11.5 12V3M8.8 5.7L11.5 3L14.2 5.7" fill="none" stroke="#555" stroke-width="1.1"/><rect x="12.0" y="14.5" width="13" height="10.5" fill="#fff" stroke="#7a7a7a" stroke-width="1"/>
<text x="13.5" y="22.8" font-family="Liberation Sans" font-size="8.5" fill="#444">10</text></svg>
<div class="t mi" style="left:737.7px;top:165.4px;font-weight:bold;color:#484848;transform:scaleX(0.985);transform-origin:0 0"><u>T</u>op/Bottom Rules</div>
<svg style="left:838px;top:165.2px" width="4" height="7" viewBox="0 0 4 7"><path d="M0 0.3L3.6 3.3L0 6.3Z" fill="#5a5a5a"/></svg>
<div class="a" style="left:737px;top:186px;width:112px;height:1px;background:#e1e1e1"></div>
<svg style="left:707px;top:195.5px" width="27" height="26" viewBox="0 0 27 26">
<rect x="0.5" y="0.5" width="22" height="20" fill="#fff"/>
<path d="M5 0.5V20.5M17 0.5V20.5M0.5 4.50H22.5M0.5 8.50H22.5M0.5 12.50H22.5M0.5 16.50H22.5" stroke="#c4c4c4" stroke-width="1"/>
<rect x="0.5" y="0.5" width="22" height="20" fill="none" stroke="#8c8c8c" stroke-width="1"/>
<rect x="5" y="0.9" width="8.2" height="3.4" fill="#3f7fc4"/><rect x="5" y="4.9" width="3" height="3.4" fill="#3f7fc4"/><rect x="5" y="8.9" width="4.5" height="3.4" fill="#3f7fc4"/><rect x="5" y="12.9" width="7" height="3.4" fill="#3f7fc4"/><rect x="5" y="16.9" width="5.5" height="3.4" fill="#3f7fc4"/><path d="M14 2.4H16" stroke="#888" stroke-width="0.8"/><path d="M14 6.4H16" stroke="#888" stroke-width="0.8"/><path d="M14 10.4H16" stroke="#888" stroke-width="0.8"/><path d="M14 14.4H16" stroke="#888" stroke-width="0.8"/><path d="M14 18.4H16" stroke="#888" stroke-width="0.8"/></svg>
<div class="t mi" style="left:737.7px;top:203.4px;font-weight:bold;color:#484848;transform:scaleX(0.936);transform-origin:0 0"><u>D</u>ata Bars</div>
<svg style="left:838px;top:203.3px" width="4" height="7" viewBox="0 0 4 7"><path d="M0 0.3L3.6 3.3L0 6.3Z" fill="#5a5a5a"/></svg>
<svg style="left:707px;top:232px" width="27" height="26.5" viewBox="0 0 27 26.5">
<rect x="0.5" y="0.5" width="22" height="20.5" fill="#fff"/>
<path d="M5 0.5V21.0M17 0.5V21.0M0.5 4.60H22.5M0.5 8.70H22.5M0.5 12.80H22.5M0.5 16.90H22.5" stroke="#c4c4c4" stroke-width="1"/>
<rect x="4.7" y="0.20" width="12.6" height="4.70" fill="#4a7fc0"/>
<rect x="4.7" y="4.30" width="12.6" height="4.70" fill="#79a98a"/>
<rect x="4.7" y="8.40" width="12.6" height="4.70" fill="#ecc97a"/>
<rect x="4.7" y="12.50" width="12.6" height="4.70" fill="#e8903e"/>
<rect x="4.7" y="16.60" width="12.6" height="4.70" fill="#d45f3c"/>
<rect x="0.5" y="0.5" width="22" height="20.5" fill="none" stroke="#8c8c8c" stroke-width="1"/>
<path d="M11 2.6H16" stroke="#555" stroke-width="0.9"/><path d="M11 6.7H16" stroke="#555" stroke-width="0.9"/><path d="M11 10.8H16" stroke="#555" stroke-width="0.9"/><path d="M11 14.9H16" stroke="#555" stroke-width="0.9"/><path d="M11 19.0H16" stroke="#555" stroke-width="0.9"/></svg>
<div class="t mi" style="left:737.7px;top:239.8px;font-weight:bold;color:#484848;transform:scaleX(0.9);transform-origin:0 0">Color <u>S</u>cales</div>
<svg style="left:838px;top:240px" width="4" height="7" viewBox="0 0 4 7"><path d="M0 0.3L3.6 3.3L0 6.3Z" fill="#5a5a5a"/></svg>
<svg style="left:707px;top:268px" width="27" height="26.5" viewBox="0 0 27 26.5">
<rect x="0.5" y="0.5" width="22" height="20.5" fill="#fff"/>
<path d="M5 0.5V21.0M17 0.5V21.0M0.5 4.60H22.5M0.5 8.70H22.5M0.5 12.80H22.5M0.5 16.90H22.5" stroke="#c4c4c4" stroke-width="1"/>
<rect x="0.5" y="0.5" width="22" height="20.5" fill="none" stroke="#8c8c8c" stroke-width="1"/>
<circle cx="8.3" cy="2.6" r="1.2" fill="#4aa070"/><path d="M11 2.6H16" stroke="#666" stroke-width="0.9"/><circle cx="8.3" cy="6.7" r="1.2" fill="#e8802f"/><path d="M11 6.7H16" stroke="#666" stroke-width="0.9"/><circle cx="8.3" cy="10.8" r="1.2" fill="#4aa070"/><path d="M11 10.8H16" stroke="#666" stroke-width="0.9"/><circle cx="8.3" cy="14.9" r="1.2" fill="#e8802f"/><path d="M11 14.9H16" stroke="#666" stroke-width="0.9"/><circle cx="8.3" cy="19.0" r="1.2" fill="#4aa070"/><path d="M11 19.0H16" stroke="#666" stroke-width="0.9"/></svg>
<div class="t mi" style="left:737.7px;top:275.79999999999995px;font-weight:bold;color:#484848;transform:scaleX(0.942);transform-origin:0 0"><u>I</u>con Sets</div>
<svg style="left:838px;top:276.5px" width="4" height="7" viewBox="0 0 4 7"><path d="M0 0.3L3.6 3.3L0 6.3Z" fill="#5a5a5a"/></svg>
<div class="a" style="left:700px;top:297px;width:149px;height:1px;background:#e1e1e1"></div>
<svg style="left:703px;top:302.5px" width="14" height="14" viewBox="0 0 14 14">
<rect x="1.5" y="0.5" width="10" height="10" fill="#fff" stroke="#777" stroke-width="1"/><path d="M1.5 3H11.5M1.5 5.5H11.5M1.5 8H11.5M4 0.5V10.5M9 0.5V10.5" stroke="#bbb" stroke-width="0.6"/><rect x="4.2" y="3.2" width="4.6" height="2.2" fill="#f0c878"/></svg>
<div class="t mi" style="left:727px;top:303.79999999999995px;font-weight:normal;color:#555;transform:scaleX(0.93);transform-origin:0 0"><u>N</u>ew Rule...</div>
<svg style="left:703px;top:322px" width="14" height="14" viewBox="0 0 14 14">
<rect x="1.5" y="0.5" width="10" height="10" fill="#fff" stroke="#777" stroke-width="1"/><path d="M1.5 3H11.5M1.5 5.5H11.5M1.5 8H11.5M4 0.5V10.5M9 0.5V10.5" stroke="#bbb" stroke-width="0.6"/><rect x="4.2" y="3.2" width="4.6" height="2.2" fill="#f0c878"/><path d="M7 12L11.5 7.5L14 10L9.5 14Z" fill="#e86a8a"/></svg>
<div class="t mi" style="left:727px;top:323.2px;font-weight:normal;color:#555;transform:scaleX(0.97);transform-origin:0 0"><u>C</u>lear Rules</div>
<svg style="left:837.7px;top:325.2px" width="4" height="7" viewBox="0 0 4 7"><path d="M0 0.3L3.6 3.3L0 6.3Z" fill="#5a5a5a"/></svg>
<svg style="left:703.5px;top:341px" width="14" height="14" viewBox="0 0 14 14">
<rect x="1.5" y="0.5" width="10" height="10" fill="#fff" stroke="#777" stroke-width="1"/><path d="M1.5 3H11.5M1.5 5.5H11.5M1.5 8H11.5M4 0.5V10.5M9 0.5V10.5" stroke="#bbb" stroke-width="0.6"/><rect x="4.2" y="3.2" width="4.6" height="2.2" fill="#f0c878"/><path d="M0.5 12.5V2" stroke="#777" stroke-width="1"/><path d="M0.5 12.5H11" stroke="#777" stroke-width="1"/></svg>
<div class="t mi" style="left:727px;top:343.2px;font-weight:normal;color:#555;transform:scaleX(0.94);transform-origin:0 0">Manage <u>R</u>ules...</div>

<!-- ===== SUBMENU ===== -->
<div class="a" style="left:849.5px;top:114px;width:150px;height:279px;background:#fff;border:1px solid #c6c6c6;box-shadow:1.5px 1.5px 3px rgba(0,0,0,0.13)"></div>
<svg style="left:857px;top:123.5px" width="27" height="25.5" viewBox="0 0 27 25.5">
<rect x="0.5" y="0.5" width="22" height="19.5" fill="#fff"/>
<path d="M6.5 0.5V20.0M17 0.5V20.0M0.5 5.38H22.5M0.5 10.25H22.5M0.5 15.12H22.5" stroke="#c4c4c4" stroke-width="1"/>
<rect x="6.2" y="5.08" width="11.1" height="5.47" fill="#f0c878"/>
<rect x="0.5" y="0.5" width="22" height="19.5" fill="none" stroke="#8c8c8c" stroke-width="1"/>
<rect x="12.0" y="13.0" width="13" height="10.5" fill="#fff" stroke="#7a7a7a" stroke-width="1"/>
<path d="M16.3 15.3L20.3 17.8L16.3 20.3" fill="none" stroke="#555" stroke-width="1"/></svg>
<div class="t mi" style="left:887.7px;top:130.6px;font-weight:bold;color:#484848;transform:scaleX(0.965);transform-origin:0 0"><u>G</u>reater Than...</div>
<svg style="left:857px;top:159.5px" width="27" height="25.5" viewBox="0 0 27 25.5">
<rect x="0.5" y="0.5" width="22" height="19.5" fill="#fff"/>
<path d="M6.5 0.5V20.0M17 0.5V20.0M0.5 5.38H22.5M0.5 10.25H22.5M0.5 15.12H22.5" stroke="#c4c4c4" stroke-width="1"/>
<rect x="6.2" y="5.08" width="11.1" height="5.47" fill="#f0c878"/>
<rect x="0.5" y="0.5" width="22" height="19.5" fill="none" stroke="#8c8c8c" stroke-width="1"/>
<rect x="12.0" y="13.0" width="13" height="10.5" fill="#fff" stroke="#7a7a7a" stroke-width="1"/>
<path d="M20.3 15.3L16.3 17.8L20.3 20.3" fill="none" stroke="#555" stroke-width="1"/></svg>
<div class="t mi" style="left:887.7px;top:166.9px;font-weight:bold;color:#484848;transform:scaleX(0.884);transform-origin:0 0"><u>L</u>ess Than...</div>
<svg style="left:857px;top:195.5px" width="27" height="26" viewBox="0 0 27 26">
<rect x="0.5" y="0.5" width="22" height="20" fill="#fff"/>
<path d="M6.5 0.5V20.5M17 0.5V20.5M0.5 5.50H22.5M0.5 10.50H22.5M0.5 15.50H22.5" stroke="#c4c4c4" stroke-width="1"/>
<rect x="-0.3" y="5.20" width="7.1" height="5.60" fill="#3f7fc4"/>
<rect x="16.7" y="5.20" width="6.6" height="5.60" fill="#3f7fc4"/>
<rect x="6.2" y="10.20" width="11.1" height="5.60" fill="#f0c878"/>
<rect x="0.5" y="0.5" width="22" height="20" fill="none" stroke="#8c8c8c" stroke-width="1"/>
</svg>
<div class="t mi" style="left:887.7px;top:203.20000000000002px;font-weight:bold;color:#484848;transform:scaleX(0.99);transform-origin:0 0"><u>B</u>etween...</div>
<svg style="left:857px;top:232px" width="27" height="25.5" viewBox="0 0 27 25.5">
<rect x="0.5" y="0.5" width="22" height="19.5" fill="#fff"/>
<path d="M6.5 0.5V20.0M17 0.5V20.0M0.5 5.38H22.5M0.5 10.25H22.5M0.5 15.12H22.5" stroke="#c4c4c4" stroke-width="1"/>
<rect x="6.2" y="5.08" width="11.1" height="5.47" fill="#f0c878"/>
<rect x="0.5" y="0.5" width="22" height="19.5" fill="none" stroke="#8c8c8c" stroke-width="1"/>
<rect x="12.0" y="13.0" width="13" height="10.5" fill="#fff" stroke="#7a7a7a" stroke-width="1"/>
<path d="M16 16.8H21M16 19H21" stroke="#555" stroke-width="0.9"/></svg>
<div class="t mi" style="left:887.7px;top:239.5px;font-weight:bold;color:#484848;transform:scaleX(0.9);transform-origin:0 0"><u>E</u>qual To...</div>
<svg style="left:857px;top:268.3px" width="27" height="25.5" viewBox="0 0 27 25.5">
<rect x="0.5" y="0.5" width="22" height="19.5" fill="#fff"/>
<path d="M6.5 0.5V20.0M17 0.5V20.0M0.5 5.38H22.5M0.5 10.25H22.5M0.5 15.12H22.5" stroke="#c4c4c4" stroke-width="1"/>
<rect x="6.2" y="5.08" width="11.1" height="5.47" fill="#f0c878"/>
<rect x="0.5" y="0.5" width="22" height="19.5" fill="none" stroke="#8c8c8c" stroke-width="1"/>
<rect x="12.0" y="8.5" width="13" height="14.5" fill="#fff" stroke="#7a7a7a" stroke-width="1"/>
<text x="13" y="20.5" font-family="Liberation Sans" font-size="8.5" fill="#444">ab</text></svg>
<div class="t mi" style="left:887.7px;top:275.79999999999995px;font-weight:bold;color:#484848;transform:scaleX(0.964);transform-origin:0 0"><u>T</u>ext that Contains...</div>
<svg style="left:857px;top:304.5px" width="27" height="25.5" viewBox="0 0 27 25.5">
<rect x="0.5" y="0.5" width="22" height="19.5" fill="#fff"/>
<path d="M6.5 0.5V20.0M17 0.5V20.0M0.5 5.38H22.5M0.5 10.25H22.5M0.5 15.12H22.5" stroke="#c4c4c4" stroke-width="1"/>
<rect x="-0.3" y="9.95" width="7.1" height="5.47" fill="#f0c878"/>
<rect x="6.2" y="9.95" width="11.1" height="5.47" fill="#f0c878"/>
<rect x="0.5" y="0.5" width="22" height="19.5" fill="none" stroke="#8c8c8c" stroke-width="1"/>
<rect x="11.5" y="10.5" width="13" height="12.5" fill="#fff" stroke="#6e6e6e" stroke-width="1"/><rect x="11.5" y="10.5" width="13" height="2.5" fill="#6e6e6e"/><path d="M11.5 16H24.5M11.5 19.5H24.5M15 13V23M18 13V23M21 13V23" stroke="#9a9a9a" stroke-width="0.6"/><rect x="18.3" y="15.8" width="3.4" height="3.4" fill="#fff" stroke="#e8702a" stroke-width="1.2"/></svg>
<div class="t mi" style="left:887.7px;top:312.09999999999997px;font-weight:bold;color:#484848;transform:scaleX(0.953);transform-origin:0 0"><u>A</u> Date Occurring...</div>
<svg style="left:857px;top:341px" width="27" height="25.5" viewBox="0 0 27 25.5">
<rect x="0.5" y="0.5" width="22" height="19.5" fill="#fff"/>
<path d="M6 0.5V20.0M17 0.5V20.0M0.5 5.38H22.5M0.5 10.25H22.5M0.5 15.12H22.5" stroke="#c4c4c4" stroke-width="1"/>
<rect x="5.7" y="5.08" width="11.6" height="5.47" fill="#f0c878"/>
<rect x="5.7" y="14.82" width="11.6" height="5.47" fill="#f0c878"/>
<rect x="0.5" y="0.5" width="22" height="19.5" fill="none" stroke="#8c8c8c" stroke-width="1"/>
<path d="M9 2.6H14" stroke="#777" stroke-width="0.7"/><path d="M9 7.5H14" stroke="#777" stroke-width="0.7"/><path d="M9 12.4H14" stroke="#777" stroke-width="0.7"/><path d="M9 17.3H14" stroke="#777" stroke-width="0.7"/></svg>
<div class="t mi" style="left:887.7px;top:348.5px;font-weight:bold;color:#484848;transform:scaleX(0.945);transform-origin:0 0"><u>D</u>uplicate Values...</div>
<div class="a" style="left:851px;top:369.5px;width:147px;height:1px;background:#e1e1e1"></div>
<div class="t mi" style="left:877.2px;top:375.7px;font-weight:normal;color:#555;transform:scaleX(0.94);transform-origin:0 0"><u>M</u>ore Rules...</div>
</body></html>
